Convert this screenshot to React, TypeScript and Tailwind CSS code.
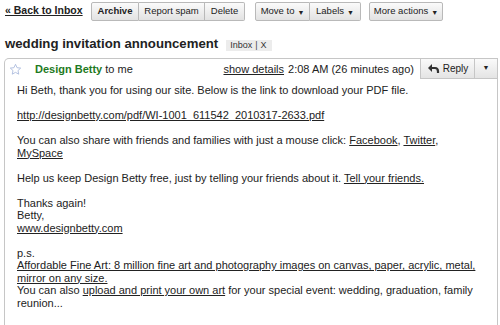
import React from "react";

const font = { fontFamily: '"Liberation Sans", Arial, sans-serif' };

const Btn: React.FC<{ children: React.ReactNode; className?: string }> = ({ children, className = "" }) => (
  <button
    className={`h-[19px] text-[9.5px] text-[#222] whitespace-nowrap border border-[#b9b9b9] bg-gradient-to-b from-[#fbfbfb] to-[#e2e2e2] flex items-center justify-center gap-[3px] ${className}`}
  >
    {children}
  </button>
);

const Caret = () => <span className="text-[7px] leading-none mt-[2px]">▼</span>;

const App: React.FC = () => {
  return (
    <div className="w-[500px] h-[325px] overflow-hidden bg-white text-[#222]" style={font}>
      {/* Toolbar */}
      <div className="flex items-center pl-[5px] pt-[1px] h-[21px] whitespace-nowrap">
        <a href="#" className="text-[10.5px] font-bold underline text-[#222] w-[86px]">
          « Back to Inbox
        </a>
        <div className="flex">
          <Btn className="w-[48px] font-bold rounded-l-[2px]">Archive</Btn>
          <Btn className="w-[66px] border-l-0">Report spam</Btn>
          <Btn className="w-[40px] border-l-0 rounded-r-[2px]">Delete</Btn>
        </div>
        <div className="flex ml-[10px]">
          <Btn className="w-[55px] rounded-l-[2px]">
            Move to <Caret />
          </Btn>
          <Btn className="w-[51px] border-l-0 rounded-r-[2px]">
            Labels <Caret />
          </Btn>
        </div>
        <Btn className="w-[74px] ml-[8px] rounded-[2px]">
          More actions <Caret />
        </Btn>
      </div>

      {/* Subject */}
      <div className="flex items-center pl-[5px] mt-[14px] h-[18px]">
        <h1 className="text-[13.2px] font-bold whitespace-nowrap">wedding invitation announcement</h1>
        <span className="ml-[8px] mt-[3px] bg-[#ececec] text-[9px] h-[11px] pl-[4px] pr-[5px] text-[#333] flex items-center whitespace-nowrap">
          Inbox<span className="mx-[3px] text-[#444]">|</span>X
        </span>
      </div>

      {/* Message */}
      <div className="mt-[5px] ml-[4px] mr-[2px] border border-[#c6c6c6] rounded-tl-[5px] border-b-0 h-[300px]">
        <div className="flex items-center h-[20px] text-[11px] whitespace-nowrap">
          <svg className="ml-[4px] mt-[1px]" width="13" height="13" viewBox="0 0 24 24" fill="none" stroke="#a8b8dc" strokeWidth="1.6">
            <path d="M12 2.5l2.9 6.2 6.7.7-5 4.6 1.4 6.6L12 17.3l-6 3.3 1.4-6.6-5-4.6 6.7-.7z" strokeLinejoin="round" />
          </svg>
          <span className="ml-[13px] font-bold text-[#1e7a22]">Design Betty</span>
          <span className="ml-[3px]">to me</span>
          <span className="ml-auto underline">show details</span>
          <span className="ml-[4px]">2:08 AM (26 minutes ago)</span>
          <div className="flex ml-[6px] self-start">
            <button className="h-[20px] w-[55px] border border-[#c6c6c6] border-t-0 bg-gradient-to-b from-[#fafafa] to-[#e4e4e4] text-[10px] flex items-center justify-center gap-[3px]">
              <svg width="13" height="11" viewBox="0 0 13 11">
                <path d="M5 1 L1 5 L5 9 Z" fill="#333" />
                <path d="M4 5 H8 Q11 5 11 8.5 V10" fill="none" stroke="#333" strokeWidth="2.2" />
              </svg>
              Reply
            </button>
            <button className="h-[20px] w-[22px] border-b border-[#c6c6c6] bg-gradient-to-b from-[#fafafa] to-[#e4e4e4] text-[7px] flex items-center justify-center">
              ▼
            </button>
          </div>
        </div>

        <div className="pl-[12px] pr-[14px] pt-[5px] text-[11px] leading-[12.5px] [&_p]:mb-[12.5px]">
          <p>Hi Beth, thank you for using our site. Below is the link to download your PDF file.</p>
          <p>
            <a href="#" className="underline">http://designbetty.com/pdf/WI-1001_611542_2010317-2633.pdf</a>
          </p>
          <p>
            You can also share with friends and families with just a mouse click:{" "}
            <a href="#" className="underline">Facebook</a>, <a href="#" className="underline">Twitter</a>,{" "}
            <a href="#" className="underline">MySpace</a>
          </p>
          <p>
            Help us keep Design Betty free, just by telling your friends about it.{" "}
            <a href="#" className="underline">Tell your friends.</a>
          </p>
          <p>
            Thanks again!
            <br />
            Betty,
            <br />
            <a href="#" className="underline">www.designbetty.com</a>
          </p>
          <p>
            p.s.
            <br />
            <a href="#" className="underline">
              Affordable Fine Art: 8 million fine art and photography images on canvas, paper, acrylic, metal, mirror on any size.
            </a>
            <br />
            You can also <a href="#" className="underline">upload and print your own art</a> for your special event: wedding, graduation, family reunion...
          </p>
        </div>
      </div>
    </div>
  );
};

export default App;
